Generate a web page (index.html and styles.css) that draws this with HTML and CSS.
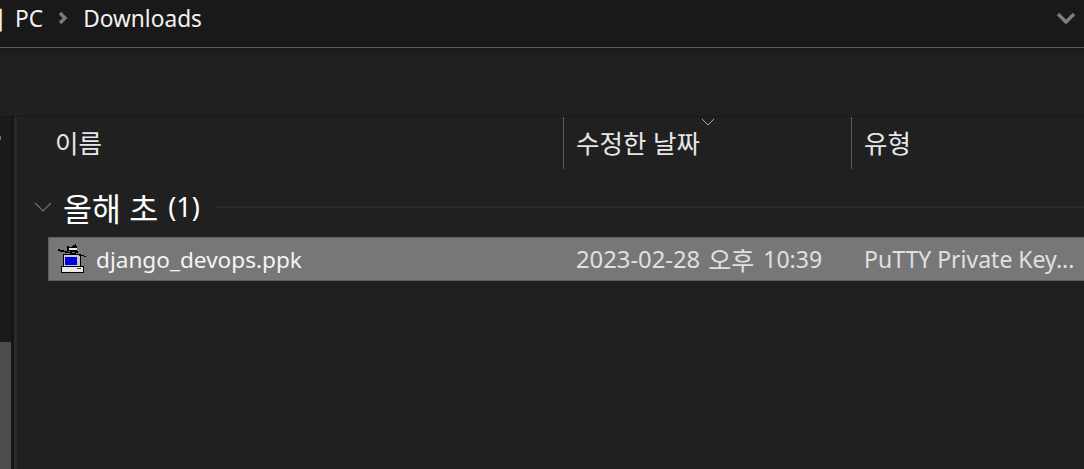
FILE: index.html
```html
<!DOCTYPE html>
<html lang="ko">
<head>
  <meta charset="UTF-8">
  <title>Downloads</title>
  <link rel="stylesheet" href="styles.css">
</head>
<body>

  <!-- Address bar -->
  <div class="address-bar">
    <div class="crumbs">
      <span class="crumb-cut">내</span>
      <span>PC</span>
      <svg class="crumb-arrow" width="12" height="14" viewBox="0 0 12 14"><path d="M4 2l5 5-5 5" fill="none" stroke="#7a7a7a" stroke-width="3.4"/></svg>
      <span>Downloads</span>
    </div>
    <svg class="history-arrow" width="20" height="13" viewBox="0 0 20 13"><path d="M2 2l8 8 8-8" fill="none" stroke="#7d7d7d" stroke-width="3.4"/></svg>
  </div>

  <div class="band"></div>

  <!-- Toolbar -->
  <div class="toolbar"></div>

  <div class="main">
    <!-- Navigation pane edge -->
    <div class="nav-pane">
      <div class="nav-scroll">
        <div class="nav-tick"></div>
        <div class="nav-thumb"></div>
      </div>
    </div>
    <div class="splitter"></div>

    <!-- File list -->
    <div class="files">
      <div class="columns">
        <div class="col col-name">이름</div>
        <div class="col col-date">
          수정한 날짜
          <svg class="sort-arrow" width="14" height="8" viewBox="0 0 14 8"><path d="M1 1l6 6 6-6" fill="none" stroke="#a8a8a8" stroke-width="1"/></svg>
        </div>
        <div class="col col-type">유형</div>
      </div>

      <div class="group">
        <svg class="group-arrow" width="18" height="10" viewBox="0 0 18 10"><path d="M1 1l8 8 8-8" fill="none" stroke="#6e6e6e" stroke-width="1.2"/></svg>
        <span class="group-title">올해 초</span>
        <span class="group-count">(1)</span>
        <div class="group-line"></div>
      </div>

      <div class="row">
        <div class="cell-name">
          <svg class="file-icon" width="28" height="30" viewBox="0 0 28 30" shape-rendering="crispEdges">
            <rect x="5" y="10" width="18" height="14" fill="#000"/>
            <rect x="6" y="11" width="16" height="12" fill="#c8c8c8"/>
            <rect x="7" y="13" width="12" height="8" fill="#0000e8"/>
            <rect x="3" y="22" width="23" height="7" fill="#000"/>
            <rect x="4" y="23" width="21" height="5" fill="#e8e8e8"/>
            <rect x="19" y="24" width="4" height="1" fill="#444"/>
            <polygon points="0,5 28,12 28,13 0,7" fill="#000"/>
            <polygon points="9,2 13,3 18,0 20,9 9,7" fill="#000"/>
            <rect x="11" y="4" width="8" height="2" fill="#e8e8e8"/>
          </svg>
          <span>django_devops.ppk</span>
        </div>
        <div class="cell-date">
          <span class="date-day">2023-02-28</span>
          <span class="date-ko">오후</span>
          <span class="date-time">10:39</span>
        </div>
        <div class="cell-type">PuTTY Private Key...</div>
      </div>
    </div>
  </div>

</body>
</html>
```

FILE: styles.css
```css
html, body {
  height: 100%;
}

body {
  margin: 0;
  background: #202020;
  color: #fff;
  font-family: 'Noto Sans', 'Noto Sans CJK KR', sans-serif;
  overflow: hidden;
  display: flex;
  flex-direction: column;
}

/* Address bar */
.address-bar {
  height: 48px;
  box-sizing: border-box;
  background: #191919;
  border-bottom: 1px solid #5c5c5c;
  display: flex;
  align-items: center;
  justify-content: space-between;
  padding-right: 8px;
  overflow: hidden;
  flex-shrink: 0;
}

.crumbs {
  display: flex;
  align-items: center;
  font-size: 22.7px;
  color: #f2f2f2;
  margin-left: -18px;
  margin-bottom: 11px;
  height: 37px;
}

.crumb-cut {
  font-size: 24px;
  margin-right: 11px;
}

.crumb-arrow {
  margin: 0 15px 0 13px;
}

.history-arrow {
  margin-bottom: 11px;
}

.band {
  height: 6px;
  background: #1c1c1c;
  flex-shrink: 0;
}

.toolbar {
  height: 63px;
  box-sizing: border-box;
  background: #202020;
  border-bottom: 1px solid #171717;
  flex-shrink: 0;
}

/* Main area */
.main {
  flex: 1;
  display: flex;
  min-height: 0;
}

.nav-pane {
  width: 14px;
  background: #151515;
  display: flex;
  flex-shrink: 0;
}

.nav-scroll {
  width: 11px;
  background: #1b1b1b;
  display: flex;
  flex-direction: column;
  justify-content: space-between;
}

.nav-tick {
  width: 1px;
  height: 4px;
  margin-top: 19px;
  background: #777;
}

.nav-thumb {
  height: 127px;
  background: #4d4d4d;
}

.splitter {
  width: 3px;
  background: #2b2b2b;
  flex-shrink: 0;
}

.files {
  flex: 1;
  min-width: 0;
  padding-left: 15px;
  overflow: hidden;
}

/* Column headers */
.columns {
  display: flex;
  height: 52px;
  font-size: 25.5px;
  color: #e6e6e6;
}

.col {
  box-sizing: border-box;
  position: relative;
  display: flex;
  align-items: center;
  padding-left: 12px;
  padding-bottom: 3px;
  border-right: 1px solid #5a5a5a;
  white-space: nowrap;
}

.col-name {
  width: 532px;
  padding-left: 23px;
}

.col-date {
  width: 288px;
}

.col-type {
  flex: 1;
  border-right: none;
}

.sort-arrow {
  position: absolute;
  left: 137px;
  top: 1px;
}

/* Group header */
.group {
  display: flex;
  align-items: center;
  height: 39px;
  margin-top: 19px;
  padding-left: 2px;
  padding-bottom: 2px;
  box-sizing: border-box;
}

.group-arrow {
  margin-right: 11px;
  flex-shrink: 0;
}

.group-title {
  font-size: 31.5px;
  white-space: nowrap;
}

.group-count {
  font-size: 27px;
  margin-left: 10px;
}

.group-line {
  flex: 1;
  height: 2px;
  background: #2b2b2b;
  margin-left: 16px;
}

/* File row */
.row {
  display: flex;
  align-items: center;
  height: 44px;
  box-sizing: border-box;
  margin-top: 10px;
  margin-left: 16px;
  background: #777;
  border: 1px solid #5e5e5e;
  border-right: none;
  font-size: 22.6px;
  color: #e0e0e0;
  white-space: nowrap;
}

.cell-name {
  width: 527px;
  display: flex;
  align-items: center;
  color: #f4f4f4;
  padding-left: 9px;
  box-sizing: border-box;
}

.file-icon {
  margin-right: 10px;
}

.cell-date {
  width: 288px;
  display: flex;
  align-items: center;
  gap: 8px;
}

.date-day {
  font-size: 23.8px;
}

.date-ko {
  font-size: 25px;
}

.date-time {
  font-size: 23px;
  margin-left: 1px;
}

.cell-type {
  font-size: 23px;
}
```
